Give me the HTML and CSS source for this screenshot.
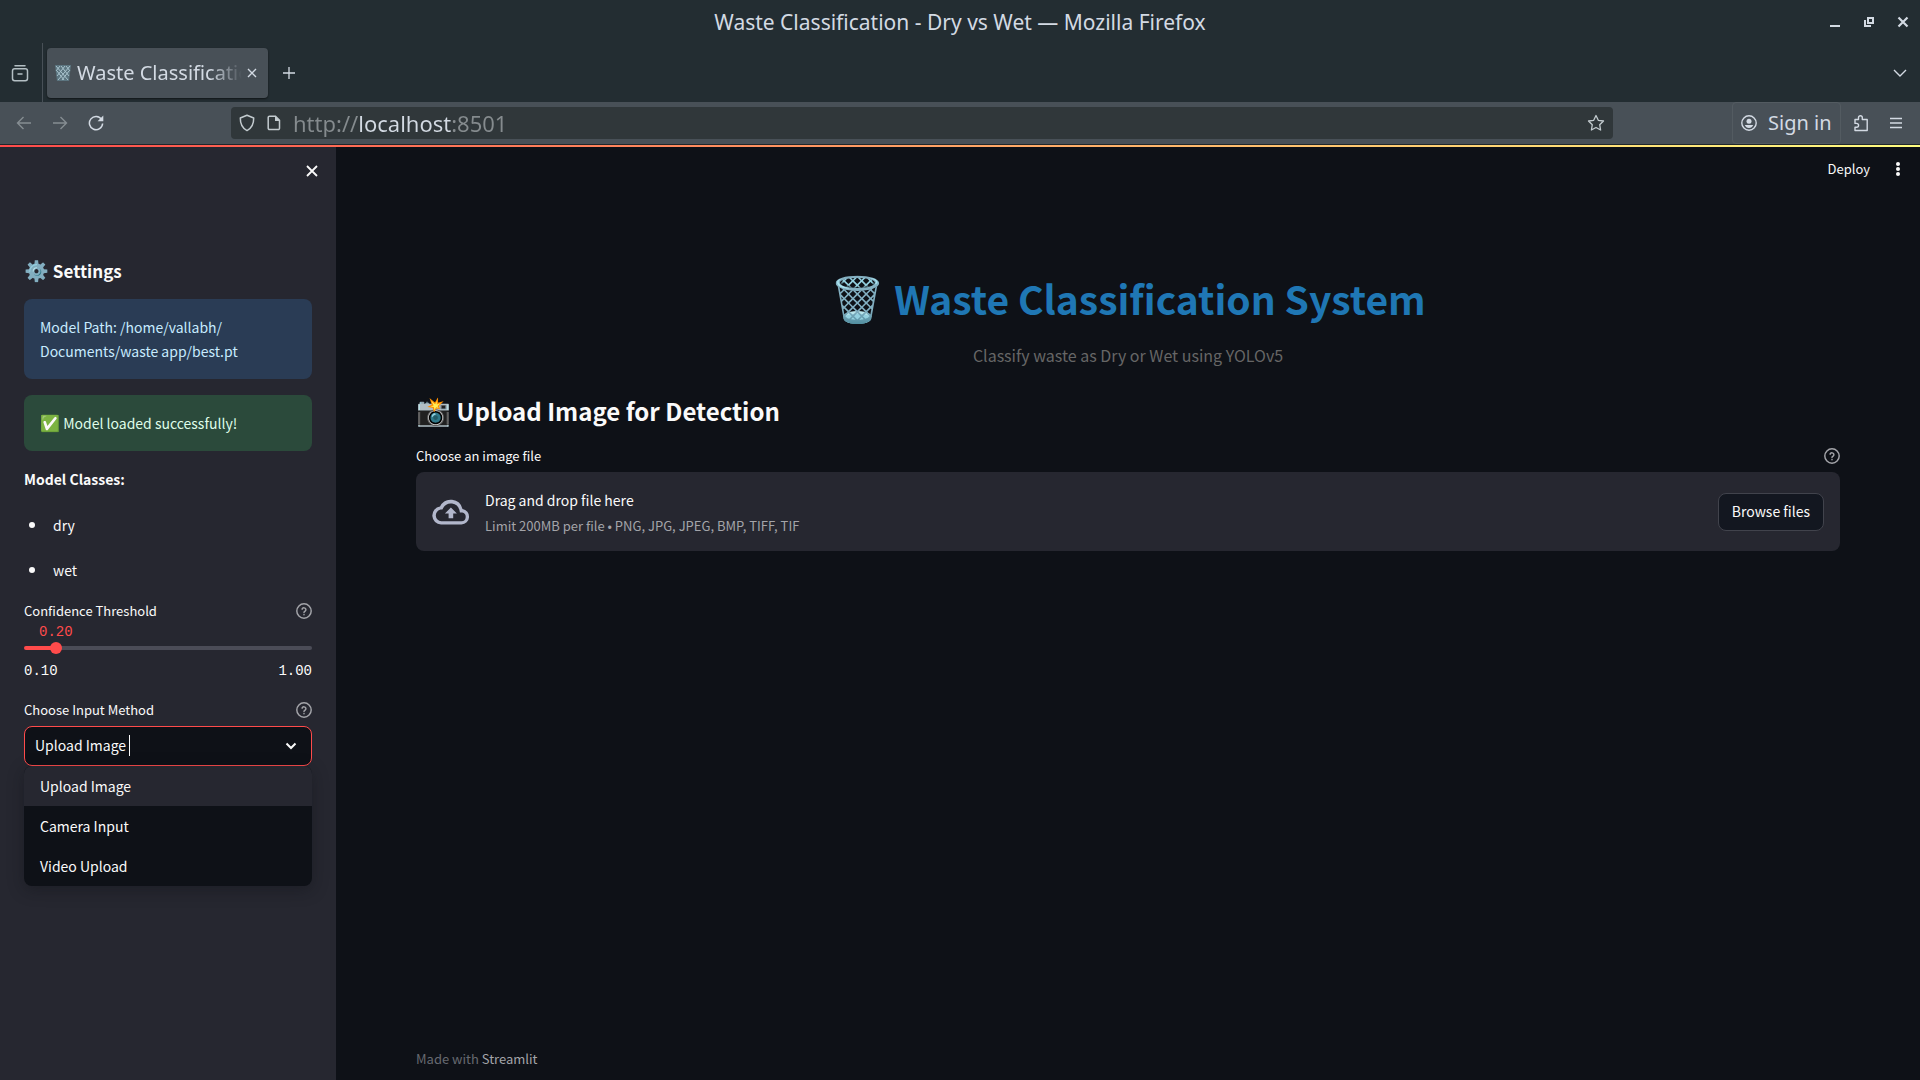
FILE: index.html
```html
<!DOCTYPE html>
<html lang="en">
<head>
<meta charset="utf-8">
<title>Waste Classification - Dry vs Wet</title>
<link rel="stylesheet" href="styles.css">
</head>
<body>
<svg class="symbols" aria-hidden="true">
  <defs>
    <symbol id="help" viewBox="0 0 24 24"><g fill="none" stroke="currentColor" stroke-width="2.200" stroke-linecap="round" stroke-linejoin="round"><circle cx="12" cy="12" r="10.800"/><path d="M9.100 9.200a3 3 0 0 1 5.800 1c0 2-2.900 2.600-2.900 4M12 17.400v.1"/></g></symbol>
  </defs>
</svg>
<div class="browser">
  <header class="titlebar">
    <span class="window-title">Waste Classification - Dry vs Wet — Mozilla Firefox</span>
    <div class="window-buttons">
      <button aria-label="Minimize"><svg viewBox="0 0 12 12" width="12" height="12"><path d="M1 9h10v2H1z" fill="currentColor"/></svg></button>
      <button aria-label="Restore"><svg viewBox="0 0 12 12" width="12" height="12"><path d="M4 1h7v7H4zM6 3v3h3V3zM1 4h2v5h5v2H1z" fill="currentColor" fill-rule="evenodd"/></svg></button>
      <button aria-label="Close window"><svg viewBox="0 0 12 12" width="12" height="12"><path d="m1.500 1.500 9 9m0-9-9 9" stroke="currentColor" stroke-width="2.200"/></svg></button>
    </div>
  </header>
  <nav class="tabs">
    <button class="recent" aria-label="Recent browsing"><svg viewBox="0 0 18 18" width="18" height="18" fill="none" stroke="currentColor" stroke-width="1.500" stroke-linecap="round"><path d="M4 1.700h10"/><rect x="1.500" y="4.700" width="15" height="12" rx="2.200"/><path d="M7 10h4"/></svg></button>
    <div class="tab">
      <svg class="favicon" viewBox="0 0 16 16" width="16" height="16"><path d="M0 0h16l-2 16H2z" fill="#5c7580"/><path d="m1 1 12 14M6 1l8 10M11 1l4 5M2 6l7 9M15 1 3 15M10 1 2 11M5 1 1 6M14 6l-7 9" stroke="#a9c3cd" stroke-width="1" fill="none"/></svg>
      <span class="tab-title">Waste Classification - Dry vs Wet</span>
      <button class="tab-close" aria-label="Close tab"><svg viewBox="0 0 10 10" width="10" height="10"><path d="m1 1 8 8m0-8-8 8" stroke="currentColor" stroke-width="1.400"/></svg></button>
    </div>
    <button class="new-tab" aria-label="New tab"><svg viewBox="0 0 12 12" width="12" height="12"><path d="M6 0v12M0 6h12" stroke="currentColor" stroke-width="1.300"/></svg></button>
    <button class="all-tabs" aria-label="List all tabs"><svg viewBox="0 0 14 10" width="14" height="10"><path d="m1 2 6 6 6-6" fill="none" stroke="currentColor" stroke-width="1.400"/></svg></button>
  </nav>
  <div class="toolbar">
    <div class="nav-buttons">
      <button class="dim" aria-label="Back"><svg viewBox="0 0 16 16" width="16" height="16"><path d="M15 8H1.500M7.500 2l-6 6 6 6" fill="none" stroke="currentColor" stroke-width="1.400"/></svg></button>
      <button class="dim" aria-label="Forward"><svg viewBox="0 0 16 16" width="16" height="16"><path d="M1 8h13.500M8.500 2l6 6-6 6" fill="none" stroke="currentColor" stroke-width="1.400"/></svg></button>
      <button aria-label="Reload"><svg viewBox="0 0 16 16" width="16" height="16"><path d="M13.600 4.600A6.600 6.600 0 1 0 14.600 8.500" fill="none" stroke="currentColor" stroke-width="1.500"/><path d="M15.300.6v5.600H9.600z" fill="currentColor"/></svg></button>
    </div>
    <div class="urlbar">
      <svg viewBox="0 0 16 18" width="16" height="18"><path d="M8 1.200 14.700 4C14.800 10 12 14.500 8 16.600 4 14.500 1.200 10 1.300 4z" fill="none" stroke="currentColor" stroke-width="1.500" stroke-linejoin="round"/></svg>
      <svg viewBox="0 0 14 16" width="14" height="16"><path d="M2.500 1.200h6l4 4v8a1.300 1.300 0 0 1-1.300 1.300H2.500a1.300 1.300 0 0 1-1.300-1.300V2.500a1.300 1.300 0 0 1 1.300-1.300z" fill="none" stroke="currentColor" stroke-width="1.500"/><path d="M8 1v5h5z" fill="currentColor"/></svg>
      <input class="url" type="text" aria-label="Address" value="http://localhost:8501">
      <button aria-label="Bookmark"><svg viewBox="0 0 18 18" width="18" height="18"><path d="m9 1.500 2.300 4.800 5.200.7-3.800 3.700.9 5.300L9 13.500 4.400 16l.9-5.300L1.500 7l5.200-.7z" fill="none" stroke="currentColor" stroke-width="1.300" stroke-linejoin="round"/></svg></button>
    </div>
    <div class="tools">
      <button class="signin"><svg viewBox="0 0 16 16" width="16" height="16"><circle cx="8" cy="8" r="7.200" fill="none" stroke="currentColor" stroke-width="1.400"/><circle cx="8" cy="6.200" r="2.500" fill="currentColor"/><path d="M3.800 10h8.400a4.500 4.500 0 0 1-8.400 0z" fill="currentColor"/></svg>Sign in</button>
      <button class="extensions" aria-label="Extensions"><svg viewBox="0 0 16 18" width="16" height="18"><path d="M2 5.500h3.500V3.600a1.900 1.900 0 0 1 3.800 0v1.900H14.200v11H2v-3.300h1.700a1.900 1.900 0 0 0 0-3.800H2z" fill="none" stroke="currentColor" stroke-width="1.400" stroke-linejoin="round"/></svg></button>
      <button class="app-menu" aria-label="Application menu"><svg viewBox="0 0 12 12" width="12" height="12"><path d="M0 1.500h12M0 6h12M0 10.500h12" stroke="currentColor" stroke-width="1.300"/></svg></button>
    </div>
  </div>
</div>
<div class="decoration"></div>
<div class="app">
  <aside class="sidebar">
    <div class="sidebar-header">
      <button aria-label="Close sidebar"><svg viewBox="0 0 12 12" width="12" height="12"><path d="m1 1 10 10m0-10L1 11" stroke="currentColor" stroke-width="1.800"/></svg></button>
    </div>
    <div class="sidebar-content">
      <h2 class="settings"><span class="emoji emoji-m">⚙️</span> Settings</h2>
      <p class="alert info">Model Path: /home/vallabh/<wbr>Documents/waste app/best.pt</p>
      <p class="alert success"><span class="emoji emoji-s">✅</span> Model loaded successfully!</p>
      <p class="classes-title">Model Classes:</p>
      <ul class="classes"><li>dry</li><li>wet</li></ul>
      <div class="field">
        <div class="field-head"><label for="confidence">Confidence Threshold</label><svg class="help"><use href="#help"/></svg></div>
        <output class="slider-value" for="confidence">0.20</output>
        <div class="slider"><input id="confidence" type="range" min="0.1" max="1" step="0.01" value="0.2"></div>
        <div class="slider-limits"><span>0.10</span><span>1.00</span></div>
      </div>
      <div class="field">
        <div class="field-head"><label for="method">Choose Input Method</label><svg class="help"><use href="#help"/></svg></div>
        <div class="dropdown">
          <select id="method"><option>Upload Image</option><option>Camera Input</option><option>Video Upload</option></select>
          <span class="caret"></span>
          <svg class="chevron" viewBox="0 0 12 8" width="12" height="8"><path d="m1.500 1.500 4.500 4.500 4.500-4.500" fill="none" stroke="currentColor" stroke-width="2"/></svg>
          <ul class="menu" role="listbox" aria-label="Choose Input Method">
            <li role="option" aria-selected="true">Upload Image</li>
            <li role="option">Camera Input</li>
            <li role="option">Video Upload</li>
          </ul>
        </div>
      </div>
    </div>
  </aside>
  <main class="main">
    <div class="app-toolbar">
      <button>Deploy</button>
      <button aria-label="Main menu"><svg viewBox="0 0 4 14" width="4" height="14" fill="currentColor"><circle cx="2" cy="2" r="2"/><circle cx="2" cy="7" r="2"/><circle cx="2" cy="12" r="2"/></svg></button>
    </div>
    <div class="content">
      <h1 class="title"><span class="emoji emoji-xl">🗑️</span> Waste Classification System</h1>
      <p class="subtitle">Classify waste as Dry or Wet using YOLOv5</p>
      <h2 class="section-title"><span class="emoji emoji-l">📸</span> Upload Image for Detection</h2>
      <div class="field">
        <div class="field-head"><label for="browse">Choose an image file</label><svg class="help"><use href="#help"/></svg></div>
        <section class="dropzone">
          <svg viewBox="0 0 38 26" width="38" height="26"><path d="M30.500 10A12 12 0 0 0 8 7.600 9 9 0 0 0 9 25.500h20.500a7.800 7.800 0 0 0 1-15.500z" fill="#b2b7cb"/><path d="M29.500 22.300H9.300a5.900 5.900 0 0 1-.6-11.700l1.700-.2.800-1.500a8.800 8.800 0 0 1 16.200 2.200l.5 2.300 2.300.2a4.400 4.400 0 0 1-.7 8.700z" fill="#262730"/><path d="m18.900 8.500 6 6h-3.700v4.800h-4.600v-4.800h-3.700z" fill="#b2b7cb"/></svg>
          <div class="drop-text"><span>Drag and drop file here</span><small>Limit 200MB per file • PNG, JPG, JPEG, BMP, TIFF, TIF</small></div>
          <button id="browse" class="browse">Browse files</button>
        </section>
      </div>
    </div>
    <footer class="footer">Made with <a href="#">Streamlit</a></footer>
  </main>
</div>
</body>
</html>
```
FILE: styles.css
```css
* { box-sizing: border-box; }
body {
  margin: 0;
  min-height: 100vh;
  display: flex;
  flex-direction: column;
  background: #0e1117;
  color: #fafafa;
  font: 14px/24px "Noto Sans CJK JP", sans-serif;
}
h1, h2, p, ul { margin: 0; padding: 0; }
button {
  display: flex;
  align-items: center;
  justify-content: center;
  padding: 0;
  border: 0;
  background: none;
  color: inherit;
  font: inherit;
}
svg { flex: none; display: block; }
.symbols { position: absolute; width: 0; height: 0; }

/* Emoji run larger than the text beside them */
.emoji { line-height: 0; font-weight: 400; }
.emoji-s { font-size: 16px; }
.emoji-m { font-size: 20px; }
.emoji-l { font-size: 28px; }
.emoji-xl { font-size: 44px; }

/* Browser window */
.browser {
  background: #232d32;
  color: #d3dae3;
  font: 20px/28px "Noto Sans", sans-serif;
  border-bottom: 1px solid #1f272b;
}
.titlebar {
  display: grid;
  grid-template-columns: 1fr auto 1fr;
  align-items: center;
  height: 43px;
}
.window-title { grid-column: 2; font-size: 21px; }
.window-buttons { display: flex; justify-content: flex-end; gap: 22px; padding-right: 11px; }
.tabs { display: flex; align-items: center; height: 59px; }
.recent { width: 43px; height: 59px; padding-right: 3px; border-right: 1px solid #485057; color: #b4bfc4; }
.tab {
  display: flex;
  align-items: center;
  width: 221px;
  height: 50px;
  margin-left: 4px;
  padding: 0 8px;
  border-radius: 4px;
  background: #485057;
  box-shadow: 0 1px 2px #0008;
}
.favicon { margin-right: 6px; }
.tab-title {
  flex: 1;
  overflow: hidden;
  white-space: nowrap;
  mask-image: linear-gradient(to left, transparent 2px, #000 34px);
}
.tab-close { width: 16px; height: 16px; }
.new-tab { width: 42px; height: 32px; }
.all-tabs { margin: 0 13px 0 auto; }
.toolbar {
  display: flex;
  align-items: center;
  justify-content: space-between;
  height: 42px;
  background: #485057;
}
.nav-buttons { display: flex; gap: 20px; width: 231px; padding-left: 16px; }
.nav-buttons .dim { color: #858d92; }
.urlbar {
  display: flex;
  flex: 1;
  align-items: center;
  gap: 12px;
  height: 32px;
  padding: 0 8px;
  border-radius: 4px;
  background: #30373a;
  color: #c3cbcf;
}
.url {
  flex: 1;
  min-width: 0;
  border: 0;
  padding: 0;
  font: inherit;
  font-size: 22px;
  outline: 0;
  color: transparent;
  background: linear-gradient(to right, #858b8e 65px, #d3dae3 65px 158px, #858b8e 158px) text;
}
.tools { display: flex; align-items: center; width: 307px; padding-left: 119px; }
.signin { height: 42px; gap: 11px; padding: 0 8px; border: 1px solid #535b61; border-radius: 4px; white-space: nowrap; }
.extensions { margin: 0 21px 0 12px; }
.decoration { height: 2px; background: linear-gradient(to right, #ff4b4b, #fffd80); }

/* Application */
.app { display: flex; flex: 1; }
.sidebar { width: 336px; padding: 0 24px; background: #262730; }
.sidebar-header { display: flex; justify-content: flex-end; height: 112px; padding: 18px 0; align-items: flex-start; }
.sidebar-header button { margin-right: -6px; }
.sidebar-content { display: flex; flex-direction: column; gap: 16px; }
.settings { font-size: 17px; line-height: 24px; font-weight: 600; }
.alert { padding: 16px; border-radius: 8px; }
.info { background: #2a3c55; color: #c7ebff; }
.success { background: #2b4a3b; color: #dffde9; }
.classes-title { font-weight: 600; }
.classes { display: flex; flex-direction: column; gap: 21px; padding: 6px 0 1px 5px; list-style: none; }
.classes li { display: flex; align-items: center; gap: 18px; }
.classes li::before { content: ""; width: 6px; height: 6px; border-radius: 50%; background: #fafafa; }
.field-head { display: flex; align-items: center; justify-content: space-between; font-size: 13px; padding-bottom: 4px; }
.help { width: 16px; height: 16px; color: #a3a4a9; }
.slider-value, .slider-limits { font: 14px/18px "Liberation Mono", monospace; }
.slider-value { display: block; margin: -4px 0 0 15px; color: #ff4b4b; }
.slider { display: grid; align-items: center; height: 14px; }
.slider::before {
  content: "";
  grid-area: 1 / 1;
  height: 4px;
  border-radius: 4px;
  background: linear-gradient(to right, #ff4b4b 11%, #4b4c57 11%);
}
.slider input {
  grid-area: 1 / 1;
  z-index: 1;
  appearance: none;
  height: 12px;
  margin: 0 -6px;
  background: none;
}
.slider input::-webkit-slider-thumb { appearance: none; width: 12px; height: 12px; border-radius: 50%; background: #ff4b4b; }
.slider-limits { display: flex; justify-content: space-between; padding-top: 6px; line-height: 21px; }
.dropdown { position: relative; }
select {
  appearance: none;
  display: block;
  width: 100%;
  height: 40px;
  padding: 0 10px 2px;
  border: 1px solid #ff4b4b;
  border-radius: 8px;
  background: #0e1117;
  color: inherit;
  font: inherit;
}
.caret { position: absolute; left: 105px; top: 9px; width: 1px; height: 21px; background: #fafafa; }
.chevron { position: absolute; right: 15px; top: 16px; }
.menu {
  position: absolute;
  top: 100%;
  left: 0;
  right: 0;
  overflow: hidden;
  border-radius: 8px;
  background: #0e1117;
  box-shadow: 0 4px 16px #0e111766;
  list-style: none;
}
.menu li { padding: 8px 16px; }
.menu li[aria-selected] { background: #262730; }
.main { display: flex; flex: 1; flex-direction: column; }
.app-toolbar { display: flex; justify-content: flex-end; gap: 26px; padding: 10px 20px; font-size: 13px; }
.content { flex: 1; padding: 80px 80px 0; }
.title { color: #1f77b4; font-size: 39px; line-height: 54px; text-align: center; }
.subtitle { margin: 17px 0 26px; color: #666; font-size: 16px; line-height: 26px; text-align: center; }
.section-title { margin-bottom: 16px; font-size: 24px; line-height: 34px; font-weight: 600; }
.dropzone { display: flex; align-items: center; gap: 15px; height: 79px; padding: 0 16px; border-radius: 8px; background: #262730; }
.drop-text { display: flex; flex: 1; flex-direction: column; gap: 2px; padding-top: 2px; }
.drop-text small { color: #a3a4a9; font-size: 13px; }
.browse { height: 38px; padding: 0 13px 2px; border: 1px solid #41434c; border-radius: 8px; background: #131720; }
.footer { padding: 0 80px 9px; color: #666970; font-size: 13px; }
.footer a { color: #a3a4a9; text-decoration: none; }
```
